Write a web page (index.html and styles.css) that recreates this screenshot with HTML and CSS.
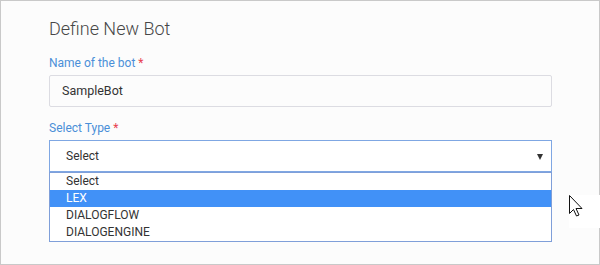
FILE: index.html
```html
<!DOCTYPE html>
<html lang="en">
<head>
    <meta charset="UTF-8">
    <meta name="viewport" content="width=device-width, initial-scale=1.0">
    <title>Define New Bot</title>
    <link rel="stylesheet" href="styles.css">
</head>
<body>

    <div class="panel">
        <h2 class="panel-title">Define New Bot</h2>

        <label class="field-label">Name of the bot <span class="req">*</span></label>
        <div class="text-input">SampleBot</div>

        <label class="field-label second">Select Type <span class="req">*</span></label>
        <div class="select-box">
            <span>Select</span>
            <span class="caret"></span>
        </div>
        <ul class="select-list">
            <li>Select</li>
            <li class="active">LEX</li>
            <li>DIALOGFLOW</li>
            <li>DIALOGENGINE</li>
        </ul>

        <!-- mouse pointer from the screenshot -->
        <svg class="pointer" width="32" height="34" viewBox="0 0 32 34">
            <rect x="1" y="1" width="31" height="33" fill="#ffffff"/>
            <path d="M1.5 1.5 L1.5 19.5 L5.5 15.5 L8.5 22 L11 21 L8 14.5 L14 14.5 Z" fill="#fff" stroke="#111" stroke-width="1" stroke-linejoin="miter"/>
        </svg>
    </div>

</body>
</html>
```

FILE: styles.css
```css
* {
    margin: 0;
    padding: 0;
    box-sizing: border-box;
    font-family: Roboto, "Liberation Sans", Arial, sans-serif;
}

body {
    background-color: #fcfcfc;
    color: #333;
}

.panel {
    position: relative;
    width: 600px;
    height: 265px;
    border: 1px solid #c9c9c9;
    background-color: #fcfcfc;
    padding: 17px 47px 0 48px;
}

.panel-title {
    font-size: 18px;
    font-weight: 300;
    line-height: 22px;
    color: #474747;
}

.field-label {
    display: block;
    margin-top: 15px;
    font-size: 12px;
    line-height: 16px;
    color: #4a8fd8;
}

.field-label.second {
    margin-top: 13px;
}

.req {
    color: #e8414f;
}

.text-input {
    margin-top: 4px;
    height: 32px;
    border: 1px solid #dcdce2;
    border-radius: 2px;
    padding-left: 12px;
    font-size: 12.5px;
    line-height: 30px;
    color: #333;
    background: #fcfcfc;
}

.select-box {
    margin-top: 4px;
    height: 32px;
    border: 1px solid #7fa7e3;
    display: flex;
    align-items: center;
    justify-content: space-between;
    padding: 0 8px 0 16px;
    font-size: 12px;
    color: #333;
    background: #fff;
}

.caret {
    width: 0;
    height: 0;
    border-left: 3.5px solid transparent;
    border-right: 3.5px solid transparent;
    border-top: 6px solid #333;
    margin-top: 1px;
}

.select-list {
    list-style: none;
    border: 1px solid #7f9fd9;
    background: #fff;
}

.select-list li {
    height: 17px;
    line-height: 17px;
    padding-left: 16px;
    font-size: 12px;
    color: #333;
}

.select-list li.active {
    background-color: #4191f7;
    color: #fff;
}

.pointer {
    position: absolute;
    left: 567px;
    top: 193px;
}
```
